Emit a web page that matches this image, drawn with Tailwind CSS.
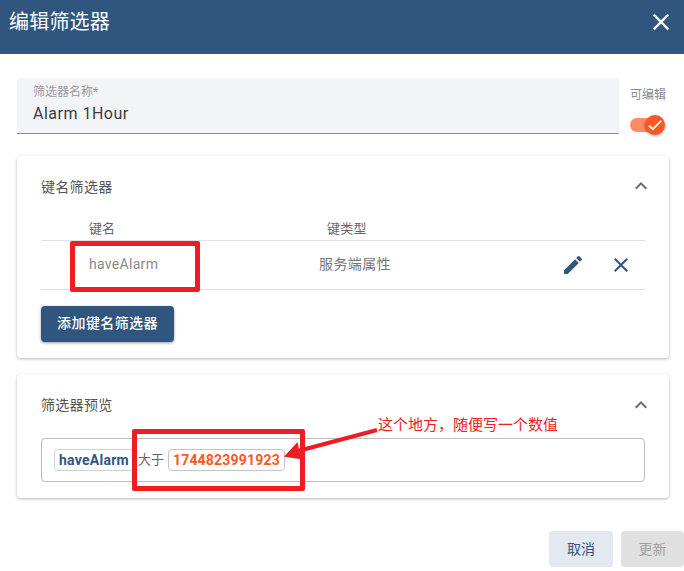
<!DOCTYPE html>
<html lang="zh">
<head>
    <meta charset="UTF-8">
    <title>编辑筛选器</title>
    <script src="https://cdn.jsdelivr.net/npm/@tailwindcss/browser@4"></script>
</head>
<body class="bg-white overflow-hidden font-['Roboto','Noto_Sans_CJK_SC',sans-serif]">
<div class="relative w-[684px] h-[571px] overflow-hidden">
    <!-- Header -->
    <header class="h-[54px] bg-[#305680] text-white flex items-start justify-between pl-[9px] pr-[11px]">
        <h1 class="text-[20px] leading-[24px] mt-[10px] tracking-[0.2px]">编辑筛选器</h1>
        <svg class="w-[28px] h-[28px] mt-[8px] mr-[-2px]" viewBox="0 0 24 24" fill="#fff"><path d="M19 6.41 17.59 5 12 10.59 6.41 5 5 6.41 10.59 12 5 17.59 6.41 19 12 13.41 17.59 19 19 17.59 13.41 12z"/></svg>
    </header>

    <main class="pl-[17px] pr-[15px] pt-[24px]">
        <!-- Name field -->
        <div class="flex h-[56px]">
            <div class="w-[602px] h-[56px] bg-[#f3f4f8] rounded-t-[4px] border-b border-[#8a8a92] pl-[16px] pt-[6px]">
                <div class="text-[12px] leading-[14px] mt-[1px] text-[#9a9a9a]">筛选器名称*</div>
                <div class="text-[16px] leading-[20px] mt-[5px] tracking-[0.5px] text-[#3c3c3c]">Alarm 1Hour</div>
            </div>
            <div class="ml-[11px] flex flex-col">
                <div class="text-[12px] leading-[14px] text-[#8a8a8a] mt-[10px]">可编辑</div>
                <div class="relative w-[32px] h-[14px] mt-[16px] rounded-full bg-[#ff8a65]">
                    <div class="absolute left-[15px] top-[-3px] w-[20px] h-[20px] rounded-full bg-[#ff5722] shadow-[0_1px_3px_rgba(0,0,0,0.4)] flex items-center justify-center">
                        <svg class="w-[18px] h-[18px]" viewBox="0 0 24 24" fill="#fff"><path d="M9 16.2 4.8 12l-1.4 1.4L9 19 21 7l-1.4-1.4z" stroke="#fff" stroke-width="0.6"/></svg>
                    </div>
                </div>
            </div>
        </div>

        <!-- Key filters card -->
        <section class="w-[652px] h-[202px] mt-[22px] bg-white rounded-[4px] shadow-[0_1px_3px_rgba(0,0,0,0.3)] px-[24px]">
            <div class="flex items-center justify-between h-[62px]">
                <h2 class="text-[14px] tracking-[0.3px] text-[#555]">键名筛选器</h2>
                <svg class="w-[24px] h-[24px] mr-[-8px] mt-[-2px]" viewBox="0 0 24 24" fill="#6b6b6b"><path d="M7.41 15.41 12 10.83l4.59 4.58L18 14l-6-6-6 6z"/></svg>
            </div>
            <div class="flex items-center h-[23px] border-b border-[#e0e0e0] text-[13px] text-[#666]">
                <span class="ml-[48px] w-[238px]">键名</span>
                <span class="tracking-[0.3px]">键类型</span>
            </div>
            <div class="flex items-center h-[49px] border-b border-[#e0e0e0] text-[14px] text-[#8a8a8a]">
                <span class="ml-[48px] w-[230px] tracking-[0.3px] mt-[-2px]">haveAlarm</span>
                <span class="text-[#757575] tracking-[0.4px] mt-[-2px]">服务端属性</span>
                <svg class="w-[24px] h-[24px] ml-[170px]" viewBox="0 0 24 24" fill="#305680"><path d="M3 17.25V21h3.75L17.81 9.94l-3.75-3.75zM20.71 7.04a1 1 0 0 0 0-1.41l-2.34-2.34a1 1 0 0 0-1.41 0l-1.83 1.83 3.75 3.75z"/></svg>
                <svg class="w-[24px] h-[24px] ml-[24px]" viewBox="0 0 24 24" fill="#305680"><path d="M19 6.41 17.59 5 12 10.59 6.41 5 5 6.41 10.59 12 5 17.59 6.41 19 12 13.41 17.59 19 19 17.59 13.41 12z"/></svg>
            </div>
            <button class="mt-[16px] w-[133px] h-[36px] pb-[2px] rounded-[4px] bg-[#305680] text-white text-[14px] tracking-[0.4px] font-medium shadow-[0_1px_3px_rgba(0,0,0,0.4)]">添加键名筛选器</button>
        </section>

        <!-- Preview card -->
        <section class="w-[652px] h-[124px] mt-[16px] bg-white rounded-[4px] shadow-[0_1px_3px_rgba(0,0,0,0.3)] px-[24px]">
            <div class="flex items-center justify-between h-[64px]">
                <h2 class="text-[14px] tracking-[0.3px] text-[#555] mt-[-2px]">筛选器预览</h2>
                <svg class="w-[24px] h-[24px] mr-[-8px] mt-[-2px]" viewBox="0 0 24 24" fill="#6b6b6b"><path d="M7.41 15.41 12 10.83l4.59 4.58L18 14l-6-6-6 6z"/></svg>
            </div>
            <div class="h-[44px] border border-[#bdbdbd] rounded-[4px] flex items-center pl-[12px] text-[13px]">
                <span class="h-[22px] leading-[20px] border border-[#c9d2dd] rounded-[4px] px-[4px] font-bold text-[14px] tracking-[0.25px] text-[#305680]">haveAlarm</span>
                <span class="ml-[4px] text-[#666]">大于</span>
                <span class="ml-[4px] h-[22px] leading-[20px] border border-[#c4c4c4] rounded-[4px] px-[4px] font-bold text-[14px] tracking-[0.2px] text-[#ff5722]">1744823991923</span>
            </div>
        </section>

        <!-- Actions -->
        <div class="flex justify-end gap-[8px] mt-[33px] mr-[-15px]">
            <button class="w-[64px] h-[36px] rounded-[4px] bg-[#e3e8f1] text-[#305680] text-[14px]">取消</button>
            <button class="w-[63px] h-[36px] rounded-[4px] bg-[#e0e0e0] text-[#a0a0a0] text-[14px]">更新</button>
        </div>
    </main>

    <!-- Red annotations laid over the screenshot -->
    <div class="absolute left-[70px] top-[241px] w-[130px] h-[51px] border-[5px] border-[#ee1c25] rounded-[2px]"></div>
    <div class="absolute left-[132px] top-[429px] w-[173px] h-[62px] border-[5px] border-[#ee1c25] rounded-[2px]"></div>
    <svg class="absolute left-0 top-0 w-[684px] h-[571px] pointer-events-none" viewBox="0 0 684 571">
        <path d="M377 430 L298 451" stroke="#ee1c25" stroke-width="4" fill="none"/>
        <path d="M286 456 L297 444 L300 458 Z" fill="#ee1c25" stroke="#ee1c25" stroke-width="2"/>
    </svg>
    <div class="absolute left-[378px] top-[415px] text-[15px] leading-[20px] text-[#ee1c25]">这个地方，随便写一个数值</div>
</div>
</body>
</html>
